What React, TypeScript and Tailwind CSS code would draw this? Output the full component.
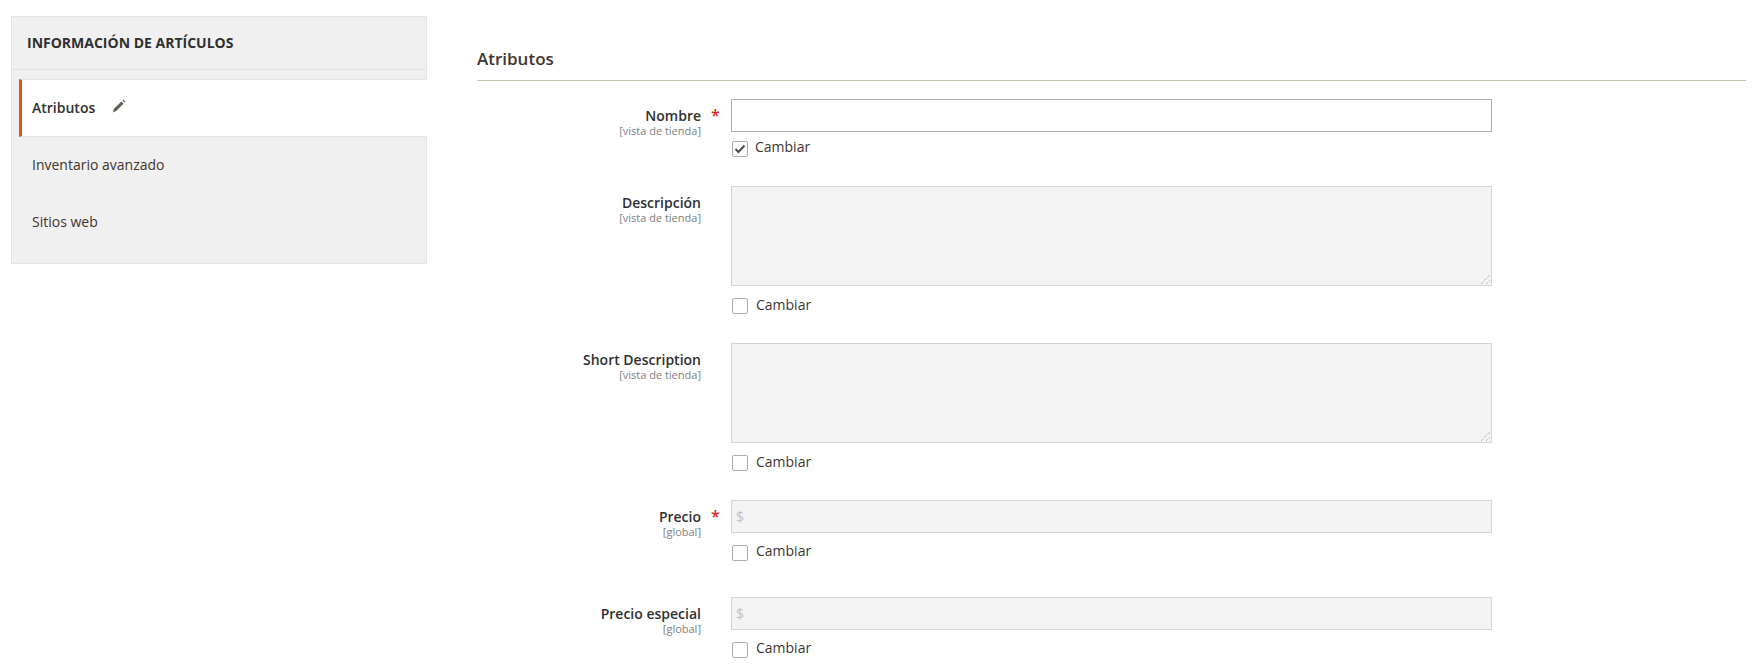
const font = "[font-family:'Open_Sans',sans-serif]";

type Field = {
  label: string;
  scope: string;
  kind: "text" | "area" | "price";
  required?: boolean;
  checked?: boolean;
  mb: string;
};

const FIELDS: Field[] = [
  { label: "Nombre", scope: "[vista de tienda]", kind: "text", required: true, checked: true, mb: "mb-[29px]" },
  { label: "Descripción", scope: "[vista de tienda]", kind: "area", mb: "mb-[29px]" },
  { label: "Short Description", scope: "[vista de tienda]", kind: "area", mb: "mb-[29px]" },
  { label: "Precio", scope: "[global]", kind: "price", required: true, mb: "mb-[36px]" },
  { label: "Precio especial", scope: "[global]", kind: "price", mb: "mb-0" },
];

function PencilIcon() {
  return (
    <svg width="15" height="15" viewBox="0 0 15 15" className="ml-[16px] mb-[1px]">
      <path d="M10.4 2.4 12.6 4.6 4.9 12.2 2 13 2.8 10Z" fill="#5f5853" />
      <path d="M11.4 1.4 12.3.6 14.4 2.7 13.6 3.6Z" fill="#5f5853" />
      <path d="M.6 14.4 1.8 13.4 2.2 13.8Z" fill="#a8a5a2" />
    </svg>
  );
}

function Checkbox({ checked }: { checked?: boolean }) {
  return (
    <span className="flex h-[16px] w-[16px] shrink-0 items-center justify-center rounded-[2px] border border-[#adadad] bg-white">
      {checked && (
        <svg width="12" height="10" viewBox="0 0 12 10">
          <path d="M1.5 5 4.5 8 10.5 1.5" fill="none" stroke="#514943" strokeWidth="2" />
        </svg>
      )}
    </span>
  );
}

function ResizeGrip() {
  return (
    <svg width="9" height="9" viewBox="0 0 9 9" className="absolute bottom-[1px] right-[1px]">
      <path d="M0 9 9 0M5 9 9 5" stroke="#a3a3a3" strokeWidth="1" strokeDasharray="1 1" />
    </svg>
  );
}

function Control({ kind }: { kind: Field["kind"] }) {
  if (kind === "text") {
    return <div className="h-[33px] w-full border border-[#adadad] bg-white" />;
  }
  if (kind === "area") {
    return (
      <div className="relative h-[100px] w-full border border-[#d4d4d4] bg-[#f3f3f3]">
        <ResizeGrip />
      </div>
    );
  }
  return (
    <div className="flex h-[33px] w-full items-center border border-[#d4d4d4] bg-[#f3f3f3] pl-[4px] text-[14px] text-[#c2c2c2]">
      $
    </div>
  );
}

function FormRow({ field }: { field: Field }) {
  return (
    <div className={`flex ${field.mb}`}>
      <div className="w-[224px] shrink-0 pt-[7px] text-right">
        <div className="text-[14px] font-semibold leading-[19px] text-[#303030]">{field.label}</div>
        <div className="text-[11px] leading-[12px] text-[#808080]">{field.scope}</div>
      </div>
      <div className="w-[30px] shrink-0 pl-[10px] pt-[7px] text-[16px] font-semibold leading-[19px] text-[#e22626]">
        {field.required ? "*" : ""}
      </div>
      <div className="w-[761px] shrink-0">
        <Control kind={field.kind} />
        <label
          className={`flex h-[16px] items-start pl-[1px] text-[14px] text-[#41362f] ${
            field.checked ? "mt-[9px]" : "mt-[12px]"
          }`}
        >
          <Checkbox checked={field.checked} />
          <span
            className={`leading-[16px] ${field.kind === "area" ? "-mt-[1px]" : "-mt-[2px]"} ${
              field.checked ? "ml-[7px]" : "ml-[8px]"
            }`}
          >
            Cambiar
          </span>
        </label>
      </div>
    </div>
  );
}

function Sidebar() {
  return (
    <aside className="h-[248px] w-[416px] shrink-0 border border-[#e3e3e3] bg-[#f0f0f0]">
      <div className="flex h-[53px] items-center border-b border-[#e3e3e3] pb-[2px] pl-[15px] text-[14px] font-bold text-[#303030]">
        INFORMACIÓN DE ARTÍCULOS
      </div>
      <div className="relative -mr-[1px] ml-[7px] mt-[9px] flex h-[58px] items-center border-y border-l-[3px] border-y-[#e3e3e3] border-l-[#eb5202] bg-white pb-[2px] pl-[10px] text-[14px] font-semibold text-[#303030]">
        Atributos
        <PencilIcon />
      </div>
      <div className="flex h-[57px] items-center pb-[2px] pl-[20px] text-[14px] text-[#41362f]">Inventario avanzado</div>
      <div className="flex h-[57px] items-center pb-[2px] pl-[20px] text-[14px] text-[#41362f]">Sitios web</div>
    </aside>
  );
}

export default function App() {
  return (
    <div className={`${font} flex h-[664px] w-[1754px] overflow-hidden bg-white pl-[11px] pt-[16px]`}>
      <Sidebar />
      <main className="ml-[50px] w-[1269px] pt-[32px]">
        <h2 className="h-[33px] border-b border-[#cac3b4] text-[17px] font-semibold leading-[22px] text-[#41362f]">
          Atributos
        </h2>
        <div className="mt-[18px]">
          {FIELDS.map((f) => (
            <FormRow key={f.label} field={f} />
          ))}
        </div>
      </main>
    </div>
  );
}
